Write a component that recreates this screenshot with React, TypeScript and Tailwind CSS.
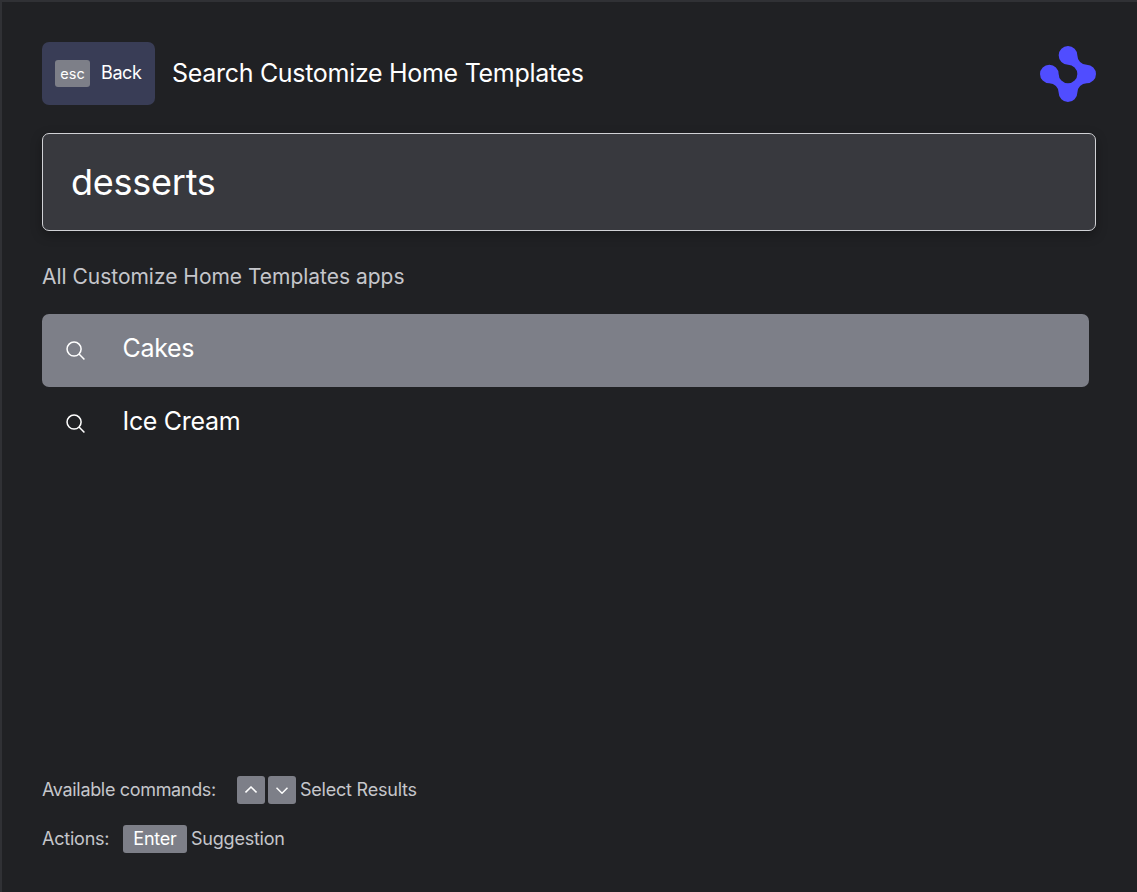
import React from "react";

function Logo() {
  return (
    <svg width="56" height="56" viewBox="0 0 6 6" fill="#504dff" aria-hidden="true">
      <path d="M2 1A1 1 0 0 1 4 1A1 1 0 0 0 5 2A1 1 0 0 1 5 4A1 1 0 0 0 4 5A1 1 0 0 1 2 5A1 1 0 0 0 1 4A1 1 0 0 1 1 2A1 1 0 0 1 2 3A1 1 0 1 0 3 2A1 1 0 0 1 2 1Z" />
    </svg>
  );
}

function SearchIcon() {
  return (
    <svg width="19" height="19" viewBox="0 0 20 20" fill="none" stroke="white" strokeWidth="1.6" aria-hidden="true">
      <circle cx="8.5" cy="8.5" r="7.4" />
      <path d="M13.7 13.7L19.4 19.4" />
    </svg>
  );
}

function Chevron({ up = false }: { up?: boolean }) {
  return (
    <span className="flex h-7 w-7 items-center justify-center rounded-[3px] bg-[#7d7f88]">
      <svg width="12" height="8" viewBox="0 0 12 8" fill="none" stroke="white" strokeWidth="1.5" aria-hidden="true">
        <path d={up ? "M0.5 6.4L6 1L11.5 6.4" : "M0.5 1.8L6 7.2L11.5 1.8"} />
      </svg>
    </span>
  );
}

function Result({ label, active = false }: { label: string; active?: boolean }) {
  return (
    <li className={`flex h-[73px] items-center rounded-[7px] pl-6 ${active ? "bg-[#7d7f88]" : ""}`}>
      <SearchIcon />
      <span className="ml-[37.5px] pb-[5px] text-[25px] leading-8 tracking-[-0.32px] text-white">{label}</span>
    </li>
  );
}

export default function App() {
  return (
    <main className="flex h-[892px] w-[1137px] flex-col border-t-2 border-l-2 border-[#303135] bg-[#202124] pt-10 pr-[41px] pl-10 font-['Inter',sans-serif] text-[#c5c6cb]">
      <header className="flex h-[63px] items-center text-white">
        <button className="flex h-[63px] w-[113px] items-center rounded-[7px] bg-[#393d56] pl-[13px]">
          <span className="flex h-[27px] w-[35px] items-center justify-center rounded-[3px] bg-[#7d7f88] text-[14.5px]">esc</span>
          <span className="ml-[11px] pb-0.5 text-[18px] tracking-[-0.4px]">Back</span>
        </button>
        <h1 className="ml-[17px] flex-1 pb-px text-[25px] leading-8 tracking-[-0.3px]">Search Customize Home Templates</h1>
        <Logo />
      </header>
      <div className="mt-7 flex h-[98px] shrink-0 items-center rounded-[7px] border border-[#d0d1d5] bg-[#38393e] pl-7 text-[36px] tracking-[-0.25px] text-white shadow-[0_4px_12px_rgba(0,0,0,0.3)]">
        desserts
      </div>
      <h2 className="mt-[30px] text-[21px] leading-8 tracking-[-0.02px]">All Customize Home Templates apps</h2>
      <ul className="mt-[21px] mr-[7px]">
        <Result label="Cakes" active />
        <Result label="Ice Cream" />
      </ul>
      <footer className="mt-auto mb-[39px] text-[18px] leading-7 tracking-[-0.22px]">
        <div className="flex h-7 items-center">
          <span className="w-[195px] tracking-[-0.33px]">Available commands:</span>
          <div className="flex gap-[3px]">
            <Chevron up />
            <Chevron />
          </div>
          <span className="ml-1">Select Results</span>
        </div>
        <div className="mt-[21px] flex h-7 items-center">
          <span className="w-[81px]">Actions:</span>
          <span className="flex h-7 w-16 items-center justify-center rounded-[3px] bg-[#7d7f88] text-white">Enter</span>
          <span className="ml-1">Suggestion</span>
        </div>
      </footer>
    </main>
  );
}
